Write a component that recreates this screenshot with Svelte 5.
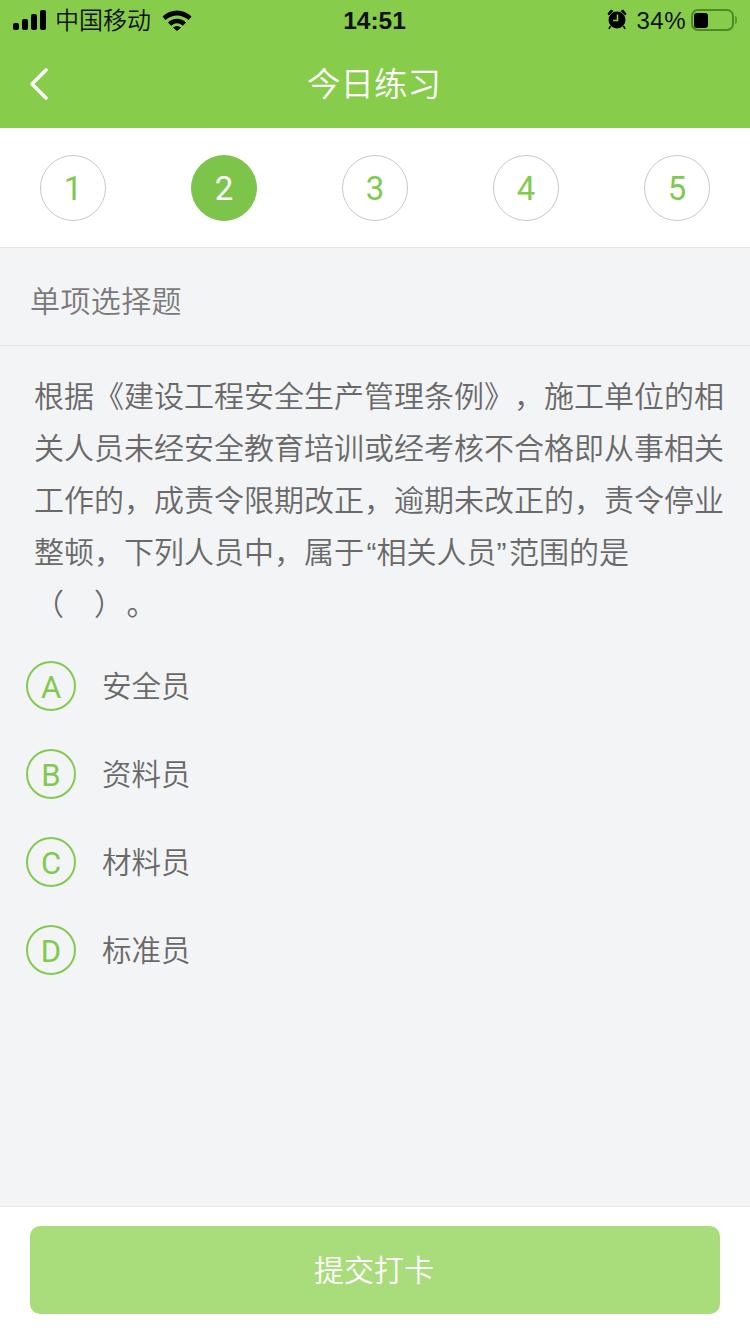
<script>
  const steps = [1, 2, 3, 4, 5];
  const options = [
    { key: 'A', text: '安全员' },
    { key: 'B', text: '资料员' },
    { key: 'C', text: '材料员' },
    { key: 'D', text: '标准员' }
  ];
</script>

<div class="page">
  <header class="header">
    <div class="status">
      <div class="left">
        <svg class="signal" width="33" height="21" viewBox="0 0 33 21" aria-hidden="true">
          <rect x="0" y="13" width="6" height="7" rx="2" />
          <rect x="9" y="9" width="6" height="11" rx="2" />
          <rect x="18" y="4" width="6" height="16" rx="2" />
          <rect x="27" y="0" width="6" height="20" rx="2" />
        </svg>
        <span class="carrier">中国移动</span>
        <svg class="wifi" width="30" height="22" viewBox="0 0 30 22" aria-hidden="true">
          <path d="M0.500 7.500C8.500 -0.500 21.500 -0.500 29.500 7.500L26.500 11C19.500 5 10.500 5 3.500 11Z" />
          <path d="M6 13.500C11 8.500 19 8.500 24 13.500L20.800 16.800C17 13.500 13 13.500 9.200 16.800Z" />
          <path d="M11 18.500C13.500 16.500 16.500 16.500 19 18.500L15 22Z" />
        </svg>
      </div>
      <span class="time">14:51</span>
      <div class="right">
        <svg class="alarm" width="22" height="22" viewBox="0 0 22 22" aria-hidden="true">
          <circle cx="11" cy="12" r="8.500" />
          <path d="M1.500 5.500L5 1.500L7.500 3L2.800 7.500ZM20.500 5.500L17 1.500L14.500 3L19.200 7.500Z" />
          <path d="M4.500 18L3 21M17.500 18L19 21" stroke="#000" stroke-width="1.600" fill="none" />
          <path d="M11.500 6.500V12.500H7" stroke="#87cd4b" stroke-width="1.600" fill="none" />
        </svg>
        <span class="percent">34%</span>
        <div class="battery">
          <div class="shell"><div class="level"></div></div>
          <div class="nub"></div>
        </div>
      </div>
    </div>
    <div class="nav">
      <svg class="back" width="20" height="32" viewBox="0 0 20 32" aria-hidden="true">
        <path d="M17 2L3 16L17 30" />
      </svg>
      <h1>今日练习</h1>
    </div>
  </header>

  <div class="steps">
    {#each steps as n}
      <div class="step" class:active={n === 2}>{n}</div>
    {/each}
  </div>

  <main class="main">
    <div class="type">单项选择题</div>
    <p class="question">根据《建设工程安全生产管理条例》，施工单位的相关人员未经安全教育培训或经考核不合格即从事相关工作的，成责令限期改正，逾期未改正的，责令停业整顿，下列人员中，属于&#8202;“相关人员”&#8202;范围的是<span class="blank">（　）&#8202;。</span></p>
    <ul class="options">
      {#each options as o}
        <li class="option">
          <span class="letter">{o.key}</span>
          <span class="label">{o.text}</span>
        </li>
      {/each}
    </ul>
  </main>

  <footer class="footer">
    <button class="submit" type="button">提交打卡</button>
  </footer>
</div>

<style>
  :global(body) {
    margin: 0;
  }
  .page {
    width: 750px;
    height: 1334px;
    display: flex;
    flex-direction: column;
    overflow: hidden;
    font-family: "Liberation Sans", "Noto Sans CJK SC", sans-serif;
    background: #f3f4f6;
    text-spacing-trim: space-all;
  }
  .header {
    background: #87cd4b;
    height: 128px;
    flex: none;
  }
  .status {
    height: 40px;
    display: grid;
    grid-template-columns: 1fr auto 1fr;
    align-items: center;
    color: #111;
    font-size: 24px;
  }
  .left {
    display: flex;
    align-items: center;
    padding-left: 13px;
  }
  .signal {
    fill: #000;
  }
  .carrier {
    margin-left: 9px;
    line-height: 30px;
    padding-top: 2px;
    font-weight: 350;
  }
  .wifi {
    fill: #000;
    margin-left: 11px;
    margin-top: -1px;
  }
  .time {
    font-weight: 700;
    font-size: 24.500px;
    margin-left: -1px;
    padding-top: 2px;
  }
  .right {
    display: flex;
    align-items: center;
    justify-content: flex-end;
    padding-right: 13px;
  }
  .alarm {
    fill: #000;
    margin-right: 8px;
    margin-top: -2px;
  }
  .percent {
    font-size: 24px;
    letter-spacing: 0.500px;
    padding-top: 2px;
  }
  .battery {
    display: flex;
    align-items: center;
    margin-left: 5px;
  }
  .shell {
    width: 43px;
    height: 22px;
    border: 2px solid #4d8a25;
    border-radius: 7px;
    padding: 2px 0 1px 1px;
    box-sizing: border-box;
    display: flex;
  }
  .level {
    width: 14px;
    background: #000;
    border-radius: 3px;
  }
  .nub {
    width: 2px;
    height: 8px;
    background: #5d9a33;
    border-radius: 0 2px 2px 0;
    margin-left: 1px;
  }
  .nav {
    height: 88px;
    display: flex;
    align-items: center;
    justify-content: center;
    position: relative;
  }
  .back {
    position: absolute;
    left: 29px;
    top: 28px;
    fill: none;
    stroke: #fff;
    stroke-width: 3.500;
    stroke-linecap: round;
    stroke-linejoin: round;
  }
  h1 {
    margin: -6px 2px 0 0;
    font-size: 33.500px;
    font-weight: 350;
    color: #fff;
  }
  .steps {
    flex: none;
    height: 119px;
    background: #fff;
    border-bottom: 1px solid #e6e6e6;
    display: flex;
    justify-content: space-between;
    align-items: center;
    padding: 0 40px;
  }
  .step {
    width: 66px;
    height: 66px;
    box-sizing: border-box;
    border: 1px solid #c8c8c8;
    border-radius: 50%;
    display: flex;
    align-items: center;
    justify-content: center;
    color: #82ca4f;
    font-family: Roboto, sans-serif;
    font-weight: 400;
    font-size: 33px;
    margin-top: 1px;
  }
  .step.active {
    background: #7cc54a;
    border-color: #7cc54a;
    color: #fff;
  }
  .main {
    flex: 1;
    min-height: 0;
  }
  .type {
    height: 98px;
    box-sizing: border-box;
    border-bottom: 1px solid #e6e6e8;
    padding: 4px 0 0 30px;
    display: flex;
    align-items: center;
    font-size: 30px;
    letter-spacing: 0.400px;
    font-weight: 350;
    color: #7a7a7a;
  }
  .question {
    margin: 0;
    padding: 25px 26px 0 34px;
    font-size: 30px;
    font-weight: 350;
    line-height: 52px;
    color: #696969;
  }
  .blank {
    white-space: nowrap;
  }
  .options {
    list-style: none;
    margin: 0;
    padding: 30px 0 0 26px;
    display: flex;
    flex-direction: column;
    gap: 38px;
  }
  .option {
    display: flex;
    align-items: center;
    height: 50px;
  }
  .letter {
    width: 50px;
    height: 50px;
    box-sizing: border-box;
    border: 2px solid #85ca50;
    border-radius: 50%;
    display: flex;
    align-items: center;
    justify-content: center;
    padding-top: 2px;
    color: #82ca4f;
    font-family: Roboto, sans-serif;
    font-weight: 400;
    font-size: 31px;
  }
  .label {
    margin-left: 26px;
    margin-top: -4px;
    font-size: 29.500px;
    font-weight: 350;
    color: #696969;
  }
  .footer {
    flex: none;
    height: 128px;
    box-sizing: border-box;
    background: #fff;
    border-top: 1px solid #e6e6ea;
    padding: 19px 30px 0;
  }
  .submit {
    display: block;
    width: 100%;
    height: 88px;
    border: 0;
    border-radius: 10px;
    background: #a9dc7a;
    color: #fff;
    font-family: inherit;
    font-size: 30px;
    font-weight: 350;
    padding: 0 2px 4px 0;
  }
</style>
